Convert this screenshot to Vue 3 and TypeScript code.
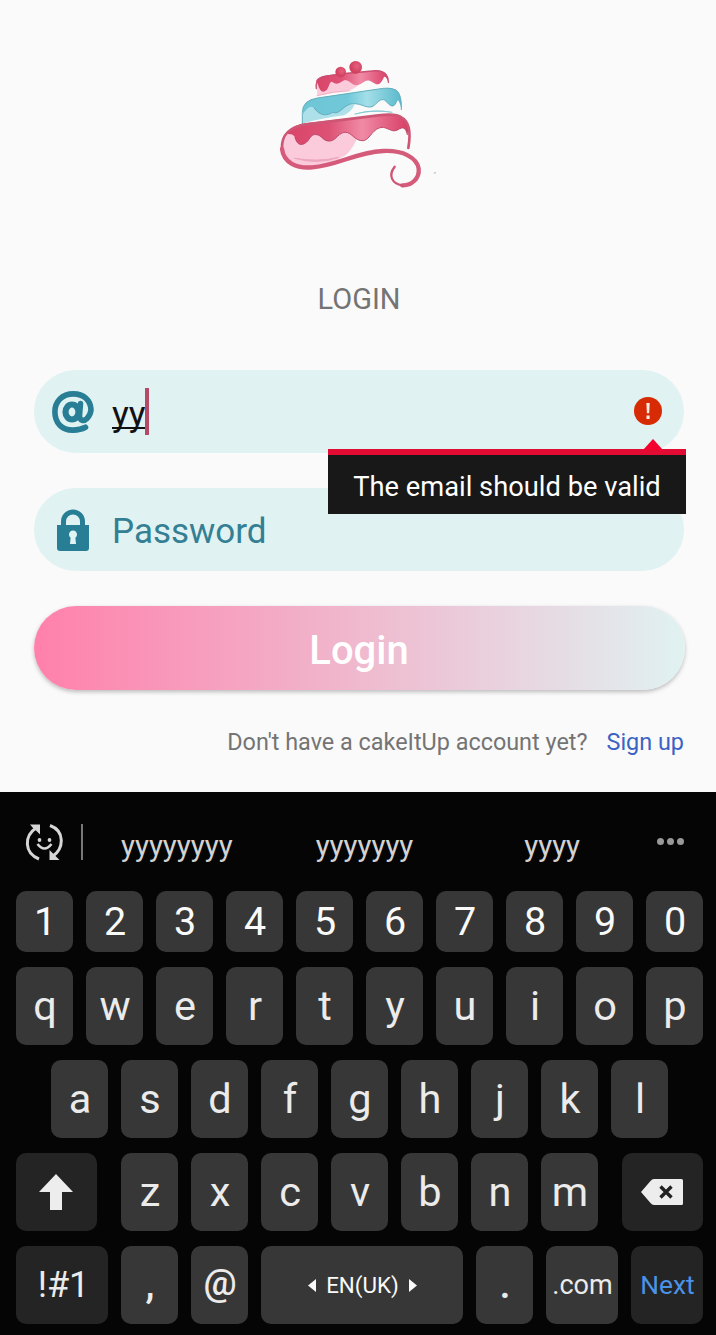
<script setup lang="ts">
const email = 'yy'
const suggestions: string[] = ['yyyyyyyy', 'yyyyyyy', 'yyyy']
const digits: string[] = '1234567890'.split('')
const topLetters: string[] = 'qwertyuiop'.split('')
const homeLetters: string[] = 'asdfghjkl'.split('')
const bottomLetters: string[] = 'zxcvbnm'.split('')
</script>

<template>
  <div class="screen">
    <main class="login">
      <svg class="logo" viewBox="0 0 540 450" fill="none" stroke-linecap="round" stroke-linejoin="round">
        <defs>
          <linearGradient id="rose" x1="0" x2="1">
            <stop offset="0" stop-color="#d94468" />
            <stop offset=".35" stop-color="#dd5275" />
            <stop offset=".62" stop-color="#f08aa5" />
            <stop offset="1" stop-color="#d83e66" />
          </linearGradient>
          <linearGradient id="sky" x1="0" x2="1">
            <stop offset="0" stop-color="#6ec5d6" />
            <stop offset=".45" stop-color="#70c8d9" />
            <stop offset=".65" stop-color="#a3dfe8" />
            <stop offset="1" stop-color="#5bb9cc" />
          </linearGradient>
          <radialGradient id="cherry" cx=".6" cy=".4">
            <stop offset="0" stop-color="#e4637f" />
            <stop offset="1" stop-color="#d3405f" />
          </radialGradient>
        </defs>
        <path d="M140 94 L142 138 Q190 127 232 124 Q265 112 272 96 L200 88Z" fill="#fbcbdc" />
        <path d="M141 137 Q190 123 240 122" stroke="#e9a3b8" stroke-width="2" />
        <path d="M138 94 Q142 80 172 76 L306 62 Q338 60 350 75 Q356 84 355 97 Q348 78 342 81 C328 112 320 104 305 95 C286 84 280 101 264 105 C246 109 236 84 220 92 C205 102 198 104 188 97 C176 88 180 124 160 125 Q149 124 143 101Z" fill="url(#rose)" />
        <path d="M139 116 Q135 91 154 82 Q178 74 306 63 Q339 59 350 76 Q356 84 355 97" stroke="#c94f70" stroke-width="4" />
        <circle cx="212" cy="66" r="16" fill="url(#cherry)" /><circle cx="257" cy="52" r="19" fill="url(#cherry)" />
        <path d="M99 174 L96 221 Q170 201 222 196 Q246 184 254 163 L142 161Z" fill="#aee0ea" />
        <path d="M99 174 Q104 151 139 144 L340 115 Q371 112 382 122 Q397 139 394 180 Q389 150 381 151 C374 173 366 174 350 156 C341 145 333 145 313 166 C294 181 278 159 247 161 C220 163 211 196 188 187 C173 197 151 200 133 175 Q120 160 99 192Z" fill="url(#sky)" />
        <path d="M97 221 V187 Q97 151 143 144 L340 115 Q371 112 384 126 Q396 144 394 179" stroke="#63afbd" stroke-width="3" />
        <path d="M133 175 C151 200 173 197 188 187 C211 196 220 163 247 161 C278 159 294 181 313 166 C333 145 341 145 350 156 C366 174 374 171 381 151" stroke="#62aebf" stroke-width="3" />
        <path d="M255 192 Q310 176 367 187 Q310 178 255 192Z" fill="#70becb" stroke="#7bc5d1" stroke-width="2" />
        <path d="M80 232 Q34 245 36 295 Q47 340 104 351 Q177 348 228 315 Q254 290 266 252Z" fill="#fbcbdc" />
        <path d="M50 252 Q70 221 116 218 L340 193 Q390 187 406 209 Q420 232 412 254 C407 231 398 230 384 239 C368 248 361 237 340 232 C308 231 301 269 280 272 C255 274 245 247 227 247 C206 246 200 270 181 273 C158 275 157 256 140 254 C120 250 120 273 103 281 C90 287 80 282 75 262 Q70 250 50 252Z" fill="url(#rose)" />
        <path d="M75 262 C80 282 90 287 103 281 C120 273 120 250 140 254 C157 256 158 275 181 273 C200 270 206 246 227 247 C245 247 255 274 280 272 C301 269 308 231 340 232 C361 237 368 248 384 239 C398 230 407 231 412 254" stroke="#bc4969" stroke-width="3" />
        <path d="M415 294 Q428 218 394 202 Q379 190 325 196 L109 223 C54 231 34 256 36 297 C41 338 79 356 127 352" stroke="#cd5675" stroke-width="8" />
        <path d="M36 297 C41 338 79 356 127 352 C204 346 254 308 339 303 C399 300 441 323 446 356 C449 387 423 407 397 406" stroke="#d55b7b" stroke-width="13" />
        <path d="M397 406 C367 402 353 377 374 350" stroke="#cd5675" stroke-width="7" />
        <path d="M74 325 Q142 345 207 322 Q145 337 74 325Z" fill="#eca7bc" stroke="#eca7bc" stroke-width="3" />
        <path d="M493 369 L496 368" stroke="#ccc" stroke-width="5" />
      </svg>

      <h1>LOGIN</h1>

      <div class="field email-field">
        <svg class="at-icon" viewBox="0 0 42 42" fill="none" stroke="#287e95" stroke-linecap="round">
          <ellipse cx="20" cy="21" rx="6.500" ry="7.500" stroke-width="6.200" />
          <path d="M28.500 12.500L27.500 24.500C27.500 30 32 30.500 35 27.500Q39 23 39 18.500C38.500 9 31.500 2.900 21.500 2.900C10 2.900 2.900 10.500 2.900 21C2.900 32 10 39.100 20.500 39.100Q28 39.300 33.500 36.300" stroke-width="5.600" />
        </svg>
        <span class="email-value">{{ email }}</span><span class="caret"></span>
        <svg class="error-icon" viewBox="0 0 28 28">
          <circle cx="14" cy="14" r="14" fill="#d62b05" />
          <path d="M12.4 6h3.3l-.5 10.3h-2.3z" fill="#f9ece5" />
          <rect x="12.5" y="18.5" width="3.1" height="3.5" fill="#f9ece5" />
        </svg>
        <div class="tooltip">The email should be valid</div>
      </div>

      <div class="field password-field">
        <svg class="lock-icon" viewBox="0 0 32 42">
          <path d="M6.5 18V12.5a9.5 9.5 0 0 1 19 0V18" fill="none" stroke="#287e95" stroke-width="5" />
          <path d="M0 16h32v23q0 3-3 3H3q-3 0-3-3z" fill="#287e95" />
          <path d="M13.6 28.7a4 4 0 1 1 4.8 0L19 35h-6z" fill="#e2f3f3" />
        </svg>
        <span class="placeholder">Password</span>
      </div>

      <button class="submit" type="button">Login</button>

      <p class="signup"><span class="question">Don't have a cakeItUp account yet?</span><a>Sign up</a></p>
    </main>

    <section class="keyboard">
      <div class="suggestions">
        <svg class="emoji-icon" viewBox="0 0 38 40" fill="none" stroke="#d6d6d6" stroke-width="3">
          <path d="M14 37C-1 31-1 14 11 6" />
          <path d="M25 3.500C40 9 39 26 28 34" />
          <path d="M5 2.500H15V12.500L11.500 9L8 6Z" fill="#d6d6d6" stroke="none" />
          <path d="M24.500 38V28L28 31.500L34.500 38Z" fill="#d6d6d6" stroke="none" />
          <circle cx="14.500" cy="18" r="1.900" fill="#d6d6d6" stroke="none" />
          <circle cx="24.500" cy="18" r="1.900" fill="#d6d6d6" stroke="none" />
          <path d="M12.500 22q7 9 14 0" stroke-width="2.600" />
        </svg>
        <i class="divider"></i>
        <div class="words"><span v-for="word in suggestions" :key="word">{{ word }}</span></div>
        <div class="more"><i></i><i></i><i></i></div>
      </div>

      <div class="row digits"><span v-for="key in digits" :key="key" class="key">{{ key }}</span></div>
      <div class="row"><span v-for="key in topLetters" :key="key" class="key">{{ key }}</span></div>
      <div class="row home"><span v-for="key in homeLetters" :key="key" class="key">{{ key }}</span></div>
      <div class="row">
        <span class="key dark shift">
          <svg width="34" height="36" viewBox="0 0 34 36"><path d="M17 0L34 18H23v18H11V18H0z" fill="#ededed" /></svg>
        </span>
        <span v-for="key in bottomLetters" :key="key" class="key">{{ key }}</span>
        <span class="key dark delete">
          <svg width="42" height="26" viewBox="0 0 42 26">
            <path d="M0 13L9.500 2Q11 0 13 0H40.500Q42 0 42 1.500V24.500Q42 26 40.500 26H13Q11 26 9.500 24z" fill="#ededed" />
            <path d="M19.500 7.500L30.500 18.500M30.500 7.500L19.500 18.500" stroke="#222" stroke-width="3.400" />
          </svg>
        </span>
      </div>
      <div class="row">
        <span class="key dark symbols">!#1</span>
        <span class="key punct">,</span>
        <span class="key at-key">@</span>
        <span class="key space">
          <svg width="8" height="13" viewBox="0 0 8 13"><path d="M8 0v13L0 6.500z" fill="#fafafa" /></svg>
          <span>EN(UK)</span>
          <svg width="8" height="13" viewBox="0 0 8 13"><path d="M0 0v13l8-6.500z" fill="#fafafa" /></svg>
        </span>
        <span class="key punct">.</span>
        <span class="key domain">.com</span>
        <span class="key dark next">Next</span>
      </div>
    </section>
  </div>
</template>

<style>
body {
  margin: 0;
}
</style>

<style scoped>
* {
  box-sizing: border-box;
}

.screen {
  width: 716px;
  height: 1335px;
  overflow: hidden;
  background: #fafafa;
  font-family: Roboto, "Liberation Sans", sans-serif;
}

.login {
  height: 792px;
  padding: 50px 32px 0 34px;
  display: flex;
  flex-direction: column;
}

.logo {
  width: 180px;
  height: 150px;
  margin-left: 236px;
  flex: none;
}

h1 {
  margin: 82px 0 0;
  height: 34px;
  line-height: 34px;
  text-align: center;
  font-size: 29px;
  font-weight: 400;
  color: #747474;
}

.field {
  position: relative;
  width: 650px;
  height: 83px;
  flex: none;
  border-radius: 42px;
  background: #e0f2f1;
  display: flex;
  align-items: center;
}

.email-field {
  z-index: 1;
  margin-top: 54px;
}

.at-icon {
  width: 42px;
  height: 42px;
  margin-left: 18px;
}

.email-value {
  margin: 4px 0 0 18px;
  font-size: 35.500px;
  line-height: 40px;
  color: #111;
  text-decoration: underline;
  text-decoration-thickness: 2px;
  text-decoration-skip-ink: none;
  text-underline-offset: 1px;
}

.caret {
  width: 4px;
  height: 47px;
  margin-left: -1px;
  background: #b64a66;
}

.error-icon {
  width: 28px;
  height: 28px;
  margin: 0 22px 1px auto;
}

.tooltip {
  position: absolute;
  left: 294px;
  top: 79px;
  width: 358px;
  height: 65px;
  border-top: 6px solid #e10b34;
  background: #171817;
  color: #fff;
  font-size: 27.300px;
  line-height: 65px;
  text-align: center;
  white-space: nowrap;
}

.tooltip::before {
  content: "";
  position: absolute;
  right: 23px;
  top: -16px;
  border: 10px solid transparent;
  border-top: 0;
  border-bottom: 11px solid #f4002f;
}

.password-field {
  margin-top: 35px;
}

.lock-icon {
  width: 32px;
  height: 42px;
  margin-left: 23px;
}

.placeholder {
  margin: 5px 0 0 23px;
  font-size: 35px;
  line-height: 42px;
  color: #347f94;
}

.submit {
  width: 651px;
  height: 84px;
  margin-top: 35px;
  padding: 5px 1px 0 0;
  flex: none;
  border: 0;
  border-radius: 42px;
  background: linear-gradient(90deg, #ff80ab, #e0f2f1);
  box-shadow: 0 2px 4px rgba(0, 0, 0, .25);
  color: #fff;
  font: 500 40px/46px Roboto, sans-serif;
}

.signup {
  margin: 37px 0 0;
  display: flex;
  justify-content: flex-end;
  font-size: 23.400px;
  line-height: 30px;
  white-space: nowrap;
}

.question {
  color: #747474;
  margin-right: 19px;
}

.signup a {
  color: #3b63c4;
}

.keyboard {
  height: 543px;
  padding: 0 13px 0 16px;
  background: #050505;
  display: flex;
  flex-direction: column;
  gap: 15px;
}

.suggestions {
  height: 84px;
  flex: none;
  display: flex;
  align-items: flex-start;
  padding: 30px 19px 0 9px;
}

.emoji-icon {
  width: 38px;
  height: 40px;
}

.divider {
  width: 2px;
  height: 36px;
  margin: 2px 0 0 18px;
  background: #777;
}

.words {
  width: 563px;
  display: grid;
  grid-template-columns: repeat(3, 1fr);
  padding-top: 7px;
  text-align: center;
  font-size: 29.500px;
  line-height: 34px;
  color: #d2d2d2;
}

.more {
  margin: 16px 0 0 auto;
  display: flex;
  gap: 3px;
}

.more i {
  width: 7px;
  height: 7px;
  border-radius: 50%;
  background: #999;
}

.row {
  display: flex;
  gap: 13px;
  height: 78px;
  flex: none;
}

.row.home {
  padding-left: 35px;
}

.key {
  width: 57px;
  flex: none;
  border-radius: 10px;
  background: #373737;
  color: #ebebeb;
  display: flex;
  align-items: center;
  justify-content: center;
  padding-left: 1px;
  font-size: 41.500px;
  line-height: 50px;
}

.digits {
  height: 61px;
}

.digits .key {
  padding-top: 1px;
  color: #fafafa;
  font-size: 39.500px;
}

.key.dark {
  background: #242424;
}

.key.shift {
  width: 81px;
  margin-right: 11px;
  padding: 0 1px 0 0;
}

.key.delete {
  width: 81px;
  margin-left: 11px;
  padding: 0 1px 0 0;
}

.key.symbols {
  width: 92px;
  padding-left: 3px;
  font-size: 36px;
}

.key.punct {
  font-size: 40px;
  font-weight: 500;
}

.key.at-key {
  padding: 0 0 5px 1px;
  font-size: 37px;
  font-weight: 500;
}

.key.space {
  width: 202px;
  gap: 10px;
  font-size: 22.400px;
  color: #fafafa;
}

.key.domain {
  width: 72px;
  font-size: 27px;
}

.key.next {
  width: 72px;
  font-size: 26.300px;
  color: #4b93e6;
}
</style>
